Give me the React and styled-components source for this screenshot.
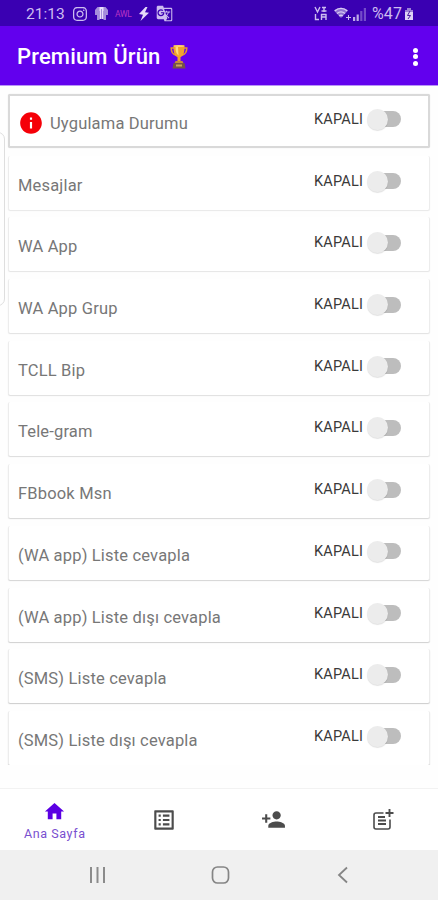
import React from 'react';
import styled, { createGlobalStyle } from 'styled-components';
import { MdHome, MdOutlineListAlt, MdPersonAdd, MdInfo, MdGTranslate } from 'react-icons/md';
import { FaInstagram } from 'react-icons/fa';

const GlobalStyle = createGlobalStyle`
  * {
    box-sizing: border-box;
  }

  body {
    margin: 0;
    background-color: #fefefe;
    font-family: Roboto, 'Liberation Sans', sans-serif;
  }
`

const Tela = styled.div`
  position: relative;
  width: 438px;
  height: 900px;
  display: flex;
  flex-direction: column;
  overflow: hidden;
`

const StatusBar = styled.div`
  height: 26px;
  flex-shrink: 0;
  display: flex;
  align-items: center;
  justify-content: space-between;
  padding: 1px 24px 0 26px;
  background-color: #3a00b2;
  color: #cdbcf0;
`

const StatusGroup = styled.div`
  display: flex;
  align-items: center;
  gap: ${props => props.$gap}px;
`

const Clock = styled.span`
  width: 40px;
  font-size: 15.5px;
  white-space: nowrap;
`

const Battery = styled.span`
  font-size: 16px;
  letter-spacing: 0.1px;
`

const Operator = styled.span`
  width: 17px;
  color: #b934c4;
  font-size: 8.5px;
  letter-spacing: -0.3px;
`

const AppBar = styled.header`
  height: 59px;
  flex-shrink: 0;
  display: flex;
  align-items: center;
  padding: 2px 20px 0 17px;
  background-color: #6200ee;
  box-shadow: 0 1px 0 #b994f7;
`

const Title = styled.h1`
  width: 153px;
  margin: 0;
  color: #fff;
  font-size: 22px;
  font-weight: 500;
  letter-spacing: 0.15px;
  white-space: nowrap;
`

const MenuButton = styled.div`
  display: flex;
  flex-direction: column;
  gap: 1.5px;
  margin-left: auto;
`

const Dot = styled.span`
  width: 5px;
  height: 5px;
  border-radius: 50%;
  background-color: #fff;
`

const List = styled.main`
  height: 680px;
  flex-shrink: 0;
  display: flex;
  flex-direction: column;
  gap: 7.7px;
  padding: 9px 8px 0;
  overflow: hidden;
`

const Card = styled.div`
  height: 54px;
  flex-shrink: 0;
  display: flex;
  align-items: center;
  padding: ${props => (props.$active ? '4px 25px 0 8px' : '5px 26px 0 9px')};
  background-color: #fff;
  border-style: solid;
  border-color: ${props => (props.$active ? '#d9d9d9' : '#ececec')};
  border-width: ${props => (props.$active ? '2px' : '0 1px')};
  border-radius: 2px;
  box-shadow: ${props => (props.$active ? '0 0 1px #d0d0d0' : `0 1px 1px ${props.$shade}`)};
`

const Label = styled.span`
  margin-left: ${props => props.$left || 0}px;
  color: #777;
  font-size: 16.5px;
  letter-spacing: 0.17px;
  white-space: nowrap;
`

const SwitchBox = styled.div`
  display: flex;
  align-items: center;
  gap: 5px;
  margin: 0 2px 8px auto;
`

const SwitchText = styled.span`
  width: 51px;
  color: #3a3a3a;
  font-size: 14.5px;
  letter-spacing: 0.2px;
  white-space: nowrap;
`

const Track = styled.span`
  width: 31px;
  height: 16px;
  display: flex;
  align-items: center;
  border-radius: 8px;
  background-color: #bdbdbd;
`

const Thumb = styled.span`
  width: 21px;
  height: 21px;
  flex-shrink: 0;
  margin-left: -3px;
  border-radius: 50%;
  background-color: #ececec;
  box-shadow: 0 1px 1px rgba(0, 0, 0, 0.12);
`

// pill that peeks in from the left side of the screen
const EdgeHandle = styled.div`
  position: absolute;
  left: -10px;
  top: 132px;
  width: 15px;
  height: 174px;
  border: 1px solid #dedede;
  border-radius: 7px;
`

const Tabs = styled.nav`
  height: 62px;
  flex-shrink: 0;
  display: grid;
  grid-template-columns: repeat(4, 1fr);
  margin-top: auto;
  border-top: 1px solid #f2f2f2;
  background-color: #fff;
`

const Tab = styled.div`
  display: flex;
  flex-direction: column;
  align-items: center;
  justify-content: center;
  padding-top: ${props => (props.$active ? 4 : 0)}px;
  color: ${props => (props.$active ? '#5b00e3' : '#4c4c4c')};
`

const TabText = styled.span`
  margin-top: 1px;
  color: #7950cf;
  font-size: 12.5px;
  letter-spacing: 0.6px;
  line-height: 20px;
`

const SystemBar = styled.footer`
  height: 50px;
  flex-shrink: 0;
  display: flex;
  align-items: center;
  justify-content: space-between;
  padding: 0 83px 0 86px;
  background-color: #f0f0f0;
`

const itens = [
  { nome: 'Mesajlar', shade: '#e8e8e8' },
  { nome: 'WA App', shade: '#e5e5e5' },
  { nome: 'WA App Grup', shade: '#e2e2e2' },
  { nome: 'TCLL Bip', shade: '#dfdfdf' },
  { nome: 'Tele-gram', shade: '#dcdcdc' },
  { nome: 'FBbook Msn', shade: '#d8d8d8' },
  { nome: '(WA app) Liste cevapla', shade: '#d4d4d4' },
  { nome: '(WA app) Liste dışı cevapla', shade: '#d0d0d0' },
  { nome: '(SMS) Liste cevapla', shade: '#cccccc' },
  { nome: '(SMS) Liste dışı cevapla', shade: '#c8c8c8' },
]

const Trophy = () => (
  <svg width="18" height="26" viewBox="0 0 18 26">
    <path d="M4 4H1.2c0 4 1.500 6.500 5 7.300M14 4h2.800c0 4-1.500 6.500-5 7.300" fill="none" stroke="#e8982c" strokeWidth="1.500" />
    <path d="M3.500 1.500h11c.2 6-.8 10.500-4 11.700V18h-3v-4.800C4.300 12 3.300 7.500 3.500 1.500z" fill="#f2a32e" />
    <path d="M5.500 3h2.500l.5 8.500C6.300 10 5.500 7 5.500 3z" fill="#ffdc78" />
    <ellipse cx="9" cy="2" rx="5.500" ry="1" fill="#ffd06c" />
    <path d="M5.500 17h7l1 2.500h-9z" fill="#c58b3b" />
    <path d="M3.500 19h11l1 5.500h-13z" fill="#765347" />
    <path d="M6 20.500h6v2H6z" fill="#cda75d" />
  </svg>
)

const Shirt = () => (
  <svg width="15" height="15" viewBox="0 0 15 15">
    <path d="M3.500 1h8L14 4v5h-2v5H9.500V5h-4v9H3V9H1V4z" fill="#a58ddb" />
    <path d="M5.500 1h4v12h-4z" fill="#e8ddfb" />
    <path d="M7.500 3v10" stroke="#a58ddb" />
  </svg>
)

const Bolt = () => (
  <svg width="12" height="14" viewBox="0 0 12 14">
    <path d="M7.500 0L1 7l4 .8L2.500 14 11 5.800l-4-.6L9.500 0z" fill="#e4daf8" />
  </svg>
)

const CallStatus = () => (
  <svg width="14" height="15" viewBox="0 0 14 15" fill="none" stroke="#cdbcf0" strokeWidth="1.400">
    <path d="M1 1l2.500 5L6 1M8 1.500h4M10 1v5M7.500 5h5M1.500 8v5.500H5M7 8.500h5.500M7.500 11h4M7.500 8v6M12 8v6" />
  </svg>
)

const Wifi = () => (
  <svg width="17" height="14" viewBox="0 0 17 14">
    <path d="M0 3.500C4-.3 10-.3 14 3.500L7 11z" fill="#8f70d2" />
    <path d="M.8 4C4.500.5 9.500.5 13.200 4M3 6.500c2.400-2 5.600-2 8 0M5.200 9c1.200-1 2.400-1 3.600 0" fill="none" stroke="#d8caf5" strokeWidth="1.300" />
    <path d="M14.500 8v5M12 10.500h5" stroke="#cdbcf0" />
  </svg>
)

const Signal = () => (
  <svg width="13" height="14" viewBox="0 0 13 14" fill="#bda9e7">
    <path d="M0 10h2.200v4H0zM3.600 7.500h2.200V14H3.600z" />
    <path d="M7.200 4h2.200v10H7.200zM10.800 1H13v13h-2.200z" opacity=".45" />
  </svg>
)

const BatteryIcon = () => (
  <svg width="10" height="14" viewBox="0 0 10 14">
    <path d="M3 1h4v2h2v3H1V3h2z" fill="#9b80d5" />
    <path d="M1 5h8v8H1z" fill="#ded3f5" />
    <path d="M6 4L3.500 8.500h3L4 12" fill="none" stroke="#4b189f" />
  </svg>
)

const NoteAdd = () => (
  <svg width="22" height="22" viewBox="0 0 22 22" fill="none" stroke="currentColor">
    <path d="M11.500 4H4a2 2 0 0 0-2 2v12a2 2 0 0 0 2 2h12a2 2 0 0 0 2-2v-7.500" strokeWidth="1.600" />
    <path d="M6 8h7M6 11.500h8M6 15h8" strokeWidth="1.800" />
    <path d="M17.500 0v8M13.500 4h8" strokeWidth="1.900" />
  </svg>
)

const Chave = () => (
  <SwitchBox>
    <SwitchText>KAPALI</SwitchText>
    <Track><Thumb /></Track>
  </SwitchBox>
)

const App = () => {
  return (
    <>
      <GlobalStyle />
      <Tela>
        <StatusBar>
          <StatusGroup $gap={6}>
            <Clock>21:13</Clock>
            <FaInstagram size={16} />
            <Shirt />
            <Operator>AWL</Operator>
            <Bolt />
            <MdGTranslate size={17} />
          </StatusGroup>
          <StatusGroup $gap={6}>
            <CallStatus />
            <StatusGroup $gap={2}>
              <Wifi />
              <Signal />
            </StatusGroup>
            <StatusGroup $gap={2}>
              <Battery>%47</Battery>
              <BatteryIcon />
            </StatusGroup>
          </StatusGroup>
        </StatusBar>
        <AppBar>
          <Title>Premium Ürün</Title>
          <Trophy />
          <MenuButton>
            <Dot />
            <Dot />
            <Dot />
          </MenuButton>
        </AppBar>
        <List>
          <Card $active>
            <MdInfo size={26} color="#f50008" />
            <Label $left={6}>Uygulama Durumu</Label>
            <Chave />
          </Card>
          {itens.map(item => (
            <Card key={item.nome} $shade={item.shade}>
              <Label>{item.nome}</Label>
              <Chave />
            </Card>
          ))}
        </List>
        <Tabs>
          <Tab $active>
            <MdHome size={23} />
            <TabText>Ana Sayfa</TabText>
          </Tab>
          <Tab><MdOutlineListAlt size={26} /></Tab>
          <Tab><MdPersonAdd size={25} /></Tab>
          <Tab><NoteAdd /></Tab>
        </Tabs>
        <SystemBar>
          <svg width="22" height="22" viewBox="0 0 22 22" stroke="#8b8b8b" strokeWidth="2">
            <path d="M5 3v16M11.500 3v16M18 3v16" />
          </svg>
          <svg width="22" height="22" viewBox="0 0 22 22" fill="none" stroke="#858585" strokeWidth="1.700">
            <rect x="2.500" y="3" width="16" height="16" rx="5" />
          </svg>
          <svg width="22" height="22" viewBox="0 0 22 22" fill="none" stroke="#858585" strokeWidth="1.800">
            <path d="M14 3.500L6 11l8 7.500" />
          </svg>
        </SystemBar>
        <EdgeHandle />
      </Tela>
    </>
  );
};

export default App;
